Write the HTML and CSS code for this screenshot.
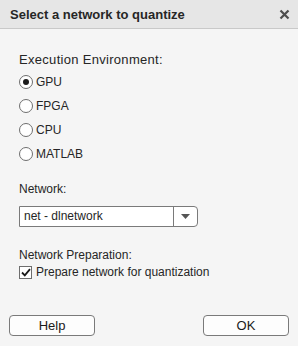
FILE: index.html
```html
<!DOCTYPE html>
<html lang="en">
<head>
    <meta charset="UTF-8">
    <title>Select a network to quantize</title>
    <link rel="stylesheet" href="styles.css">
</head>
<body>

<div class="dialog">
    <div class="titlebar">
        <span class="title">Select a network to quantize</span>
        <svg class="close" width="11" height="11" viewBox="0 0 11 11">
            <path d="M1.5 1.5 L9.5 9.5 M9.5 1.5 L1.5 9.5" stroke="#4d4d4d" stroke-width="2.2"/>
        </svg>
    </div>

    <div class="content">
        <div class="label env-label">Execution Environment:</div>
        <div class="radios">
            <div class="option"><span class="radio checked"></span>GPU</div>
            <div class="option"><span class="radio"></span>FPGA</div>
            <div class="option"><span class="radio"></span>CPU</div>
            <div class="option"><span class="radio"></span>MATLAB</div>
        </div>

        <div class="label network-label">Network:</div>
        <div class="dropdown">
            <div class="value">net - dlnetwork</div>
            <div class="arrow">
                <svg width="9" height="5" viewBox="0 0 9 5"><path d="M0 0 H9 L4.5 5 Z" fill="#555"/></svg>
            </div>
        </div>

        <div class="label prep-label">Network Preparation:</div>
        <div class="option check-row">
            <span class="checkbox">
                <svg width="10" height="9" viewBox="0 0 10 9"><path d="M1 4.5 L3.8 7.3 L9 1.2" stroke="#1a1a1a" stroke-width="1.8" fill="none"/></svg>
            </span>
            Prepare network for quantization
        </div>
    </div>

    <div class="buttons">
        <button>Help</button>
        <button>OK</button>
    </div>
</div>

</body>
</html>
```

FILE: styles.css
```css
body {
    margin: 0;
    font-family: "Liberation Sans", Arial, sans-serif;
    background-color: #f5f5f5;
}
.dialog {
    width: 298px;
    height: 346px;
    display: flex;
    flex-direction: column;
    background-color: #f5f5f5;
}
.titlebar {
    height: 29px;
    box-sizing: border-box;
    border-bottom: 1px solid #c9c9c9;
    background-color: #e6e6e6;
    display: flex;
    align-items: center;
    justify-content: space-between;
    padding: 0 8px 0 10px;
}
.title {
    font-size: 13px;
    font-weight: bold;
    color: #262626;
}
.content {
    padding: 23px 0 0 19px;
    font-size: 12px;
    color: #262626;
}
.label {
    height: 15px;
    line-height: 15px;
}
.env-label {
    font-size: 13px;
    letter-spacing: 0.3px;
}
.radios {
    margin-top: 3px;
}
.option {
    display: flex;
    align-items: center;
    height: 24px;
}
.radio {
    width: 12px;
    height: 12px;
    border: 1px solid #6e6e6e;
    border-radius: 50%;
    background-color: #fff;
    margin-right: 3px;
    display: flex;
    align-items: center;
    justify-content: center;
}
.radio.checked::after {
    content: "";
    width: 6px;
    height: 6px;
    border-radius: 50%;
    background-color: #1a1a1a;
}
.network-label {
    margin-top: 16px;
}
.dropdown {
    margin-top: 9px;
    width: 179px;
    height: 21px;
    box-sizing: border-box;
    border: 1px solid #7a7a7a;
    border-radius: 0 4px 4px 0;
    background-color: #fff;
    display: flex;
}
.value {
    flex: 1;
    padding-left: 4px;
    line-height: 19px;
}
.arrow {
    width: 23px;
    border-left: 1px solid #7a7a7a;
    display: flex;
    align-items: center;
    justify-content: center;
}
.prep-label {
    margin-top: 21px;
}
.check-row {
    height: 18px;
}
.checkbox {
    width: 11px;
    height: 11px;
    border: 1px solid #6e6e6e;
    background-color: #fff;
    margin-right: 4px;
    display: flex;
    align-items: center;
    justify-content: center;
}
.buttons {
    margin-top: auto;
    display: flex;
    justify-content: space-between;
    padding: 0 9px 10px 9px;
}
button {
    width: 86px;
    height: 21px;
    border: 1px solid #7a7a7a;
    border-radius: 4px;
    background-color: #fdfdfd;
    font-family: "Liberation Sans", Arial, sans-serif;
    font-size: 13px;
    color: #1a1a1a;
    padding: 0;
}
```
